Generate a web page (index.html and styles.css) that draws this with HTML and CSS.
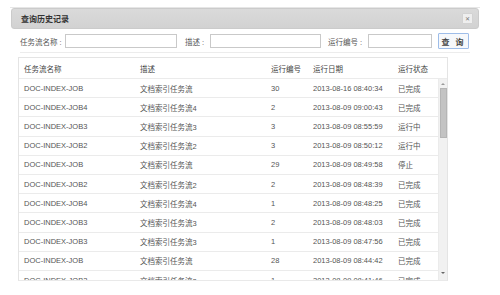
FILE: index.html
```html
<!DOCTYPE html>
<html lang="zh-CN">
<head>
<meta charset="utf-8">
<title>查询历史记录</title>
<link rel="stylesheet" href="styles.css">
</head>
<body>
<div class="dialog">
  <div class="titlebar">
    <span class="title">查询历史记录</span>
    <span class="close">✕</span>
  </div>
  <div class="search">
    <label class="lbl lbl-name">任务流名称 :</label>
    <input class="inp inp-name" type="text">
    <label class="lbl lbl-desc">描述 :</label>
    <input class="inp inp-desc" type="text">
    <label class="lbl lbl-no">运行编号 :</label>
    <input class="inp inp-no" type="text">
    <button class="btn">查 询</button>
  </div>
  <div class="sep"></div>
  <div class="table">
    <div class="row head">
      <div class="c c1">任务流名称</div>
      <div class="c c2">描述</div>
      <div class="c c3">运行编号</div>
      <div class="c c4">运行日期</div>
      <div class="c c5">运行状态</div>
    </div>
    <div class="bodywrap">
      <div class="rows">
        <div class="row"><div class="c c1">DOC-INDEX-JOB</div><div class="c c2">文档索引任务流</div><div class="c c3">30</div><div class="c c4">2013-08-16 08:40:34</div><div class="c c5">已完成</div></div>
        <div class="row"><div class="c c1">DOC-INDEX-JOB4</div><div class="c c2">文档索引任务流4</div><div class="c c3">2</div><div class="c c4">2013-08-09 09:00:43</div><div class="c c5">已完成</div></div>
        <div class="row"><div class="c c1">DOC-INDEX-JOB3</div><div class="c c2">文档索引任务流3</div><div class="c c3">3</div><div class="c c4">2013-08-09 08:55:59</div><div class="c c5">运行中</div></div>
        <div class="row"><div class="c c1">DOC-INDEX-JOB2</div><div class="c c2">文档索引任务流2</div><div class="c c3">3</div><div class="c c4">2013-08-09 08:50:12</div><div class="c c5">运行中</div></div>
        <div class="row"><div class="c c1">DOC-INDEX-JOB</div><div class="c c2">文档索引任务流</div><div class="c c3">29</div><div class="c c4">2013-08-09 08:49:58</div><div class="c c5">停止</div></div>
        <div class="row"><div class="c c1">DOC-INDEX-JOB2</div><div class="c c2">文档索引任务流2</div><div class="c c3">2</div><div class="c c4">2013-08-09 08:48:39</div><div class="c c5">已完成</div></div>
        <div class="row"><div class="c c1">DOC-INDEX-JOB4</div><div class="c c2">文档索引任务流4</div><div class="c c3">1</div><div class="c c4">2013-08-09 08:48:25</div><div class="c c5">已完成</div></div>
        <div class="row"><div class="c c1">DOC-INDEX-JOB3</div><div class="c c2">文档索引任务流3</div><div class="c c3">2</div><div class="c c4">2013-08-09 08:48:03</div><div class="c c5">已完成</div></div>
        <div class="row"><div class="c c1">DOC-INDEX-JOB3</div><div class="c c2">文档索引任务流3</div><div class="c c3">1</div><div class="c c4">2013-08-09 08:47:56</div><div class="c c5">已完成</div></div>
        <div class="row"><div class="c c1">DOC-INDEX-JOB</div><div class="c c2">文档索引任务流</div><div class="c c3">28</div><div class="c c4">2013-08-09 08:44:42</div><div class="c c5">已完成</div></div>
        <div class="row"><div class="c c1">DOC-INDEX-JOB2</div><div class="c c2">文档索引任务流2</div><div class="c c3">1</div><div class="c c4">2013-08-09 08:41:46</div><div class="c c5">已完成</div></div>
      </div>
      <div class="scrollbar">
        <div class="arrow up"></div>
        <div class="thumb"></div>
        <div class="track"></div>
        <div class="arrow down"></div>
      </div>
    </div>
  </div>
</div>
</body>
</html>
```

FILE: styles.css
```css
* { box-sizing: border-box; }
html, body {
  margin: 0;
  padding: 0;
  background: #ffffff;
  width: 500px;
  height: 295px;
  overflow: hidden;
}
body {
  font-family: "Liberation Sans", "Noto Sans CJK SC", sans-serif;
  font-size: 7.5px;
  color: #555;
}
.dialog {
  margin: 7px 0 0 10px;
  width: 470px;
  border-top: 1px solid #e6e6e6;
}
.titlebar {
  display: flex;
  align-items: center;
  justify-content: space-between;
  height: 21px;
  margin: 0 1px 0 1px;
  padding: 0 5px 0 9px;
  background: linear-gradient(#dadada, #d2d2d2);
  border: 1px solid #cbcbcb;
  border-radius: 3px;
}
.title {
  font-size: 8px;
  font-weight: bold;
  color: #333;
}
.close {
  display: flex;
  align-items: center;
  justify-content: center;
  width: 11px;
  height: 11px;
  font-family: "DejaVu Sans", sans-serif;
  font-size: 6px;
  font-weight: bold;
  color: #777;
  background: #eeeeee;
  border: 1px solid #d2d2d2;
  border-radius: 1px;
}
.search {
  display: flex;
  align-items: center;
  height: 16px;
  margin-top: 4px;
  padding-left: 10px;
}
.lbl {
  flex: none;
  color: #555;
  font-size: 7.5px;
  white-space: nowrap;
}
.lbl-name { width: 45px; }
.lbl-desc { width: 25px; margin-left: 8px; }
.lbl-no { width: 40px; margin-left: 7px; }
.inp {
  flex: none;
  height: 14px;
  margin: 0;
  padding: 0;
  border: 1px solid #c9c9c9;
  background: #fff;
}
.inp-name { width: 112px; }
.inp-desc { width: 111px; }
.inp-no { width: 64px; }
.btn {
  flex: none;
  margin-left: 6px;
  width: 31px;
  height: 16px;
  padding: 0;
  font-family: "Liberation Sans", "Noto Sans CJK SC", sans-serif;
  font-size: 8px;
  font-weight: bold;
  color: #444;
  letter-spacing: 2px;
  background: #f6f8fb;
  border: 1px solid #9ebde9;
  border-radius: 1px;
}
.sep {
  margin: 3px 10px 0 10px;
  border-top: 1px solid #ececec;
}
.table {
  margin: 4px 0 0 8px;
  width: 430px;
  border: 1px solid #e4e4e4;
  border-bottom-color: #e9e9e9;
}
.row {
  display: flex;
  align-items: center;
  height: 19.2px;
  border-bottom: 1px solid #ebebeb;
  white-space: nowrap;
}
.row.head {
  height: 21px;
  color: #444;
}
.c { padding-left: 5px; overflow: hidden; }
.c1 { width: 116px; }
.c2 { width: 131px; }
.c3 { width: 42px; }
.c4 { width: 85px; }
.c5 { flex: 1; }
.bodywrap {
  display: flex;
  height: 201px;
  overflow: hidden;
}
.rows {
  flex: 1;
  overflow: hidden;
}
.rows .row:last-child { border-bottom: none; }
.scrollbar {
  width: 9px;
  display: flex;
  flex-direction: column;
  align-items: center;
  background: #f1f1f1;
  border-left: 1px solid #ebebeb;
}
.arrow {
  width: 0;
  height: 0;
  border-left: 2px solid transparent;
  border-right: 2px solid transparent;
}
.arrow.up {
  margin-top: 4px;
  border-bottom: 2px solid #999;
}
.arrow.down {
  margin-bottom: 6px;
  border-top: 2px solid #666;
}
.thumb {
  margin-top: 3px;
  width: 7px;
  height: 50px;
  background: #c3c3c3;
  border: 1px solid #b5b5b5;
}
.track { flex: 1; }
```
